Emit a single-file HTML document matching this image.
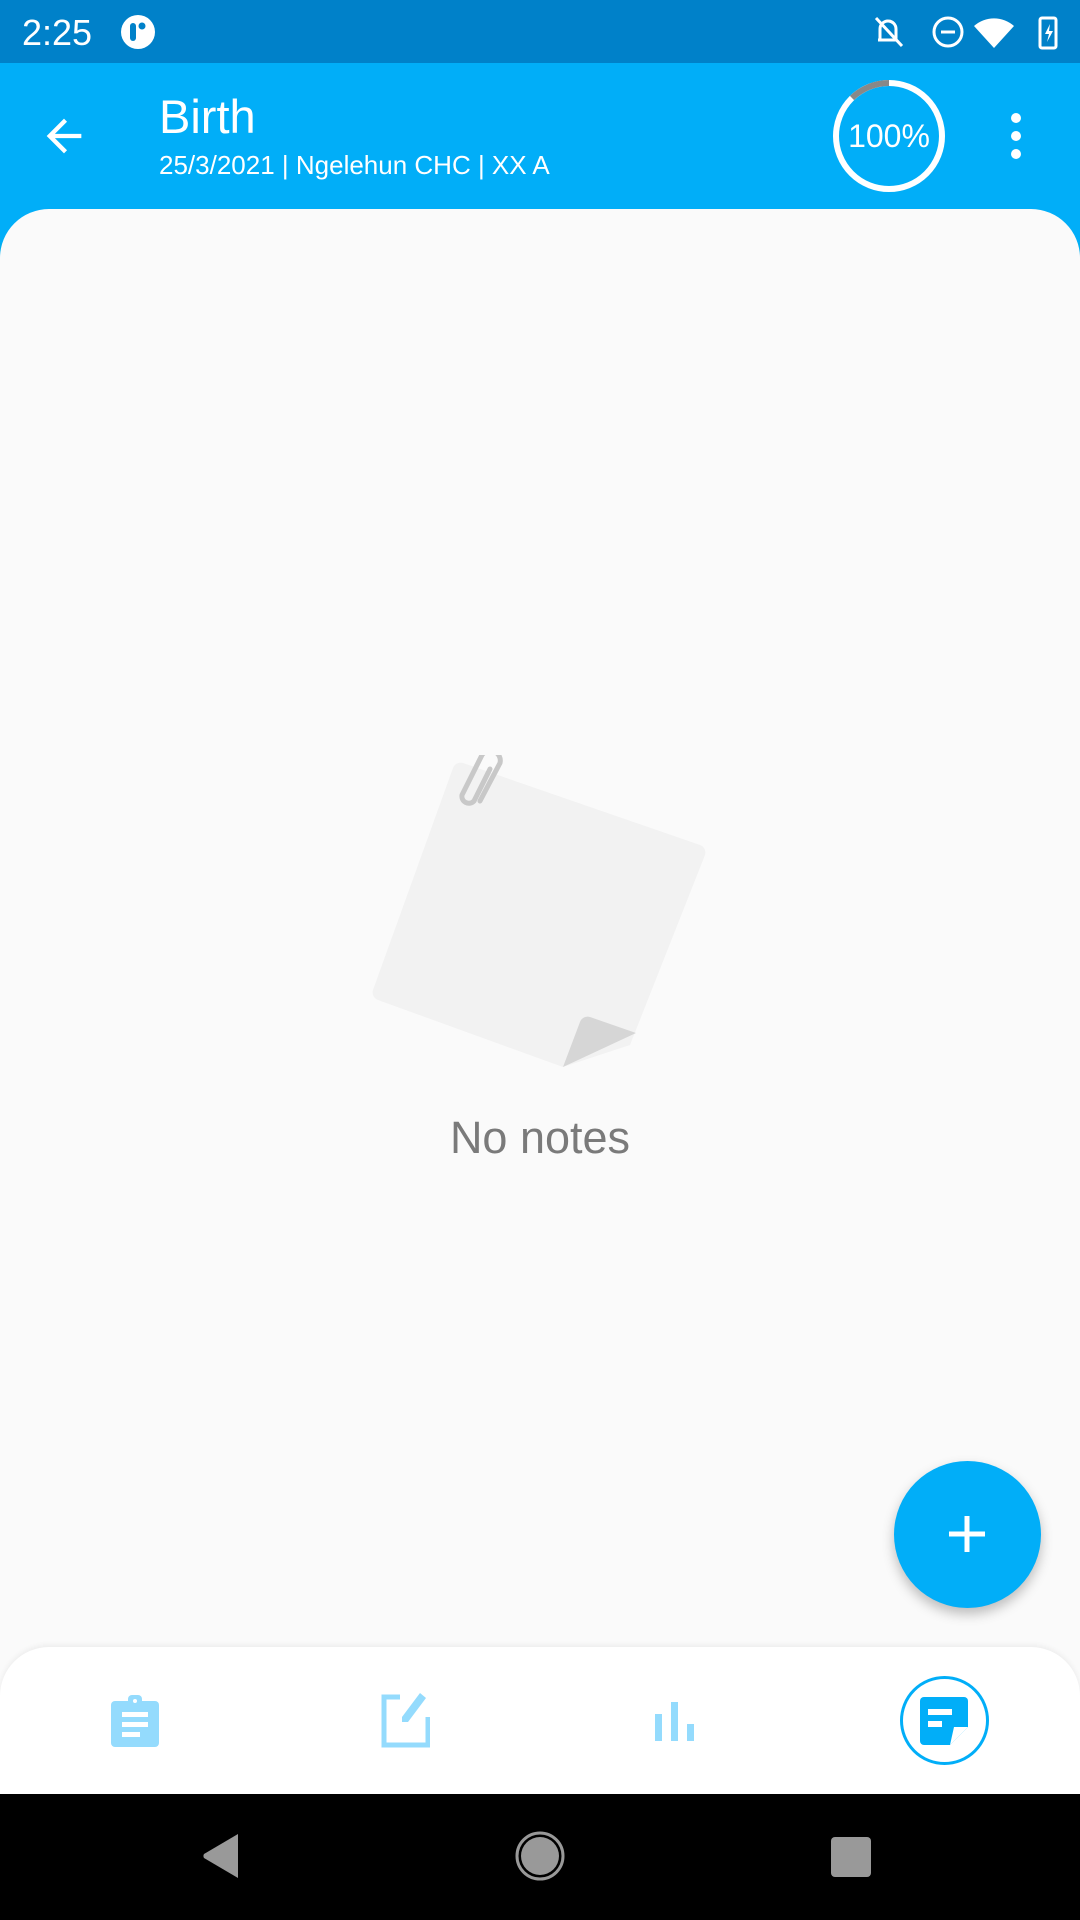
<!DOCTYPE html>
<html><head><meta charset="utf-8"><style>
*{margin:0;padding:0;box-sizing:border-box}
body{width:1080px;height:1920px;position:relative;overflow:hidden;background:#00AEEF;font-family:"Liberation Sans",sans-serif}
.status{position:absolute;left:0;top:0;width:1080px;height:63px;background:#0081C9}
.appbar{position:absolute;left:0;top:63px;width:1080px;height:180px;background:#01AEF8}
.content{position:absolute;left:0;top:209px;width:1080px;height:1500px;background:#FAFAFA;border-radius:49px 49px 0 0}
.bnav{position:absolute;left:0;top:1647px;width:1080px;height:150px;background:#fff;border-radius:49px 49px 0 0;box-shadow:0 -2px 6px rgba(0,0,0,.06)}
.sysnav{position:absolute;left:0;top:1794px;width:1080px;height:126px;background:#000}
.t{position:absolute;color:#fff;white-space:nowrap}
</style></head><body>
<div class="status"></div>
<div class="t" style="left:22px;top:12px;font-size:36px">2:25</div>
<svg style="position:absolute;left:120px;top:14px" width="36" height="36" viewBox="0 0 36 36"><circle cx="18" cy="18" r="17" fill="#fff"/><rect x="10" y="9" width="6" height="18" rx="3" fill="#0081C9"/><circle cx="22" cy="12" r="3.5" fill="#0081C9"/></svg>
<svg style="position:absolute;left:870px;top:14px" width="200" height="36" viewBox="0 0 200 36">
<g fill="none" stroke="#fff" stroke-width="3"><path d="M10 26V15a8 8 0 0 1 16 0v11H8"/><path d="M6 4l26 28"/><circle cx="78" cy="18" r="14"/><path d="M71 18h14"/></g>
<path d="M104 12a30 30 0 0 1 40 0l-20 22z" fill="#fff"/>
<rect x="170" y="4" width="16" height="30" rx="2" fill="none" stroke="#fff" stroke-width="3"/><path d="M180 10l-5 10h4l-2 8 6-11h-4z" fill="#fff"/>
</svg>
<div class="appbar"></div>
<svg style="position:absolute;left:38px;top:110px" width="52" height="52" viewBox="0 0 24 24"><path d="M20 11H7.8l5.6-5.6L12 4l-8 8 8 8 1.4-1.4L7.8 13H20z" fill="#fff"/></svg>
<div class="t" style="left:159px;top:89px;font-size:47px">Birth</div>
<div class="t" style="left:159px;top:150px;font-size:26px">25/3/2021 | Ngelehun CHC | XX A</div>
<svg style="position:absolute;left:830px;top:77px" width="118" height="118" viewBox="0 0 118 118"><circle cx="59" cy="59" r="53" fill="none" stroke="#fff" stroke-width="6"/><path d="M59 6A53 53 0 0 0 22 21" fill="none" stroke="#888" stroke-width="6"/><text x="59" y="70" text-anchor="middle" font-size="32" fill="#fff" font-family="Liberation Sans">100%</text></svg>
<svg style="position:absolute;left:1004px;top:112px" width="24" height="50" viewBox="0 0 24 50"><circle cx="12" cy="6" r="5" fill="#fff"/><circle cx="12" cy="24" r="5" fill="#fff"/><circle cx="12" cy="42" r="5" fill="#fff"/></svg>
<div class="content"></div>
<svg style="position:absolute;left:370px;top:755px" width="340" height="330" viewBox="0 0 340 330">
<path d="M93 8L330 90a8 8 0 0 1 5 10L260 290l-67 22L8 245a8 8 0 0 1-5-10L83 13a8 8 0 0 1 10-5z" fill="#F2F2F2"/>
<path d="M193 312l17-45a8 8 0 0 1 10-5l46 16z" fill="#D6D6D6"/>
<path d="M110 46l20-38a10 10 0 0 0-18-8l-20 40a7 7 0 0 0 12 6l16-32" fill="none" stroke="#C8C8C8" stroke-width="5" stroke-linecap="round"/>
</svg>
<div class="t" style="left:0;width:1080px;text-align:center;top:1112px;font-size:45px;color:#7a7a7a">No notes</div>
<div style="position:absolute;left:894px;top:1461px;width:147px;height:147px;border-radius:50%;background:#01AEF8;box-shadow:0 6px 12px rgba(0,0,0,.25)"></div>
<svg style="position:absolute;left:945px;top:1512px" width="44" height="44" viewBox="0 0 44 44"><path d="M22 4v36M4 22h36" stroke="#fff" stroke-width="5"/></svg>
<div class="bnav"></div>
<svg style="position:absolute;left:110px;top:1695px" width="50" height="52" viewBox="0 0 50 52"><rect x="1" y="6" width="48" height="46" rx="4" fill="#94DBFD"/><rect x="18" y="0" width="14" height="10" rx="4" fill="#94DBFD"/><circle cx="25" cy="6" r="2" fill="#fff"/><rect x="12" y="17" width="26" height="5" fill="#fff"/><rect x="12" y="27" width="26" height="5" fill="#fff"/><rect x="12" y="37" width="18" height="5" fill="#fff"/></svg>
<svg style="position:absolute;left:380px;top:1693px" width="50" height="56" viewBox="0 0 50 56"><path d="M20 4H4v48h44V24" fill="none" stroke="#94DBFD" stroke-width="5"/><path d="M40 0l6 5-18 24-6 0 0-5z" fill="#94DBFD"/></svg>
<svg style="position:absolute;left:655px;top:1702px" width="40" height="40" viewBox="0 0 40 40"><rect x="0" y="12" width="7" height="27" fill="#94DBFD"/><rect x="16" y="0" width="7" height="39" fill="#94DBFD"/><rect x="32" y="22" width="7" height="17" fill="#94DBFD"/></svg>
<div style="position:absolute;left:900px;top:1676px;width:89px;height:89px;border-radius:50%;border:3px solid #01AEF8"></div>
<svg style="position:absolute;left:920px;top:1697px" width="48" height="48" viewBox="0 0 48 48"><path d="M4 0h40a4 4 0 0 1 4 4v26L30 48H4a4 4 0 0 1-4-4V4a4 4 0 0 1 4-4z" fill="#01AEF8"/><path d="M30 48l4-18h14z" fill="#fff"/><rect x="8" y="12" width="24" height="6" fill="#fff"/><rect x="8" y="24" width="14" height="6" fill="#fff"/></svg>
<div class="sysnav"></div>
<svg style="position:absolute;left:200px;top:1832px" width="50" height="50" viewBox="0 0 50 50"><path d="M38 2v44L4 26a4 4 0 0 1 0-4z" fill="#999"/></svg>
<svg style="position:absolute;left:514px;top:1830px" width="52" height="52" viewBox="0 0 52 52"><circle cx="26" cy="26" r="23" fill="none" stroke="#999" stroke-width="3"/><circle cx="26" cy="26" r="19" fill="#999"/></svg>
<div style="position:absolute;left:831px;top:1837px;width:40px;height:40px;border-radius:4px;background:#999"></div>
</body></html>
